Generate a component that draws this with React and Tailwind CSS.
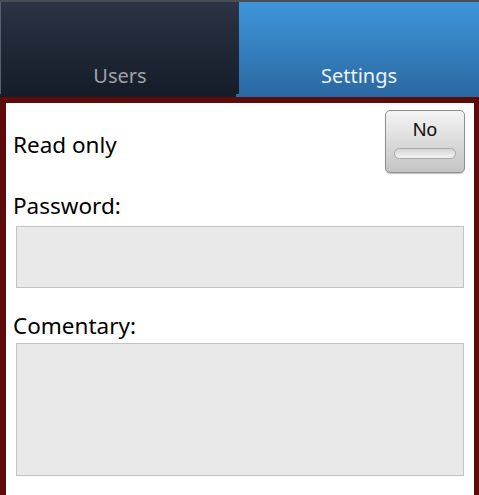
export default function App() {
  return (
    <div
      className="w-[479px] h-[495px] overflow-hidden bg-[#5e0b0b] flex flex-col"
      style={{ fontFamily: '"Noto Sans", "Open Sans", sans-serif' }}
    >
      {/* top strip */}
      <div className="h-[2px] bg-[#4a4d52]" />

      {/* tabs */}
      <div className="flex h-[95px]">
        <div className="w-[239px] flex flex-col">
          <div className="flex-1 flex items-end justify-center pb-[6px] bg-gradient-to-b from-[#2c3445] to-[#151d29] border-l border-[#5a606a]">
            <span className="text-[20px] text-[#9fa3a8] leading-none pb-[2px]">Users</span>
          </div>
          <div className="h-[3px] flex">
            <div className="flex-1 bg-[#151d29]" />
            <div className="w-[3px] bg-[#2c6aa3]" />
          </div>
        </div>
        <div className="flex-1 flex items-end justify-center pb-[11px] bg-gradient-to-b from-[#3f96da] to-[#2a68a2]">
          <span className="text-[20px] text-[#eef3f8] leading-none">Settings</span>
        </div>
      </div>

      {/* content panel */}
      <div className="flex-1 mt-[6px] ml-[6px] mr-[5px] bg-white flex flex-col pl-[7px] pr-[9px] text-black">
        <div className="flex items-center justify-between mt-[7px] h-[63px]">
          <span className="text-[22.5px] leading-none pt-[7px]">Read only</span>
          <button className="w-[80px] h-[63px] rounded-[5px] border border-[#8f8f8f] bg-gradient-to-b from-[#f4f4f4] to-[#c4c4c4] flex flex-col items-center pt-[9px] shadow-[0_1px_1px_rgba(0,0,0,0.25)]">
            <span className="text-[19px] leading-none text-[#111]" style={{ fontFamily: '"Liberation Sans", sans-serif' }}>No</span>
            <span className="mt-[9px] w-[62px] h-[11px] rounded-full border border-[#a8a8a8] bg-gradient-to-b from-[#d4d4d4] to-[#f4f4f4]" />
          </button>
        </div>

        <span className="text-[22.5px] leading-none mt-[22px]">Password:</span>
        <div className="mt-[8px] ml-[3px] mr-[1px] h-[62px] bg-[#e9e9e9] border border-[#c3c3c3]" />

        <span className="text-[22.5px] leading-none mt-[27px]">Comentary:</span>
        <div className="mt-[6px] ml-[3px] mr-[1px] h-[133px] bg-[#e9e9e9] border border-[#c3c3c3]" />
      </div>
    </div>
  );
}
